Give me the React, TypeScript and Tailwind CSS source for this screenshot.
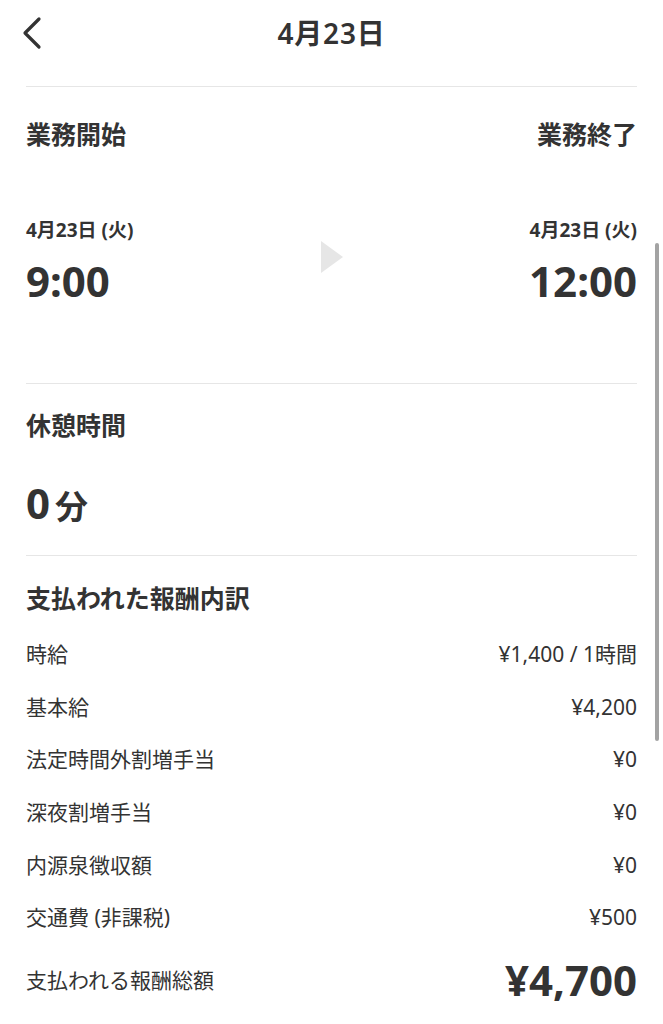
import React from 'react';

const rows: { label: string; value: string }[] = [
  { label: '時給', value: '¥1,400 / 1時間' },
  { label: '基本給', value: '¥4,200' },
  { label: '法定時間外割増手当', value: '¥0' },
  { label: '深夜割増手当', value: '¥0' },
  { label: '内源泉徴収額', value: '¥0' },
  { label: '交通費 (非課税)', value: '¥500' },
];

const font = { fontFamily: '"Noto Sans", "Noto Sans CJK JP", sans-serif' };

export default function App() {
  return (
    <div className="relative w-[663px] h-[1024px] overflow-hidden bg-white text-[#333333]" style={font}>
      <header className="grid grid-cols-[1fr_auto_1fr] items-center h-[66px] px-[20px]">
        <svg width="24" height="34" viewBox="0 0 24 34" className="ml-[-1px]">
          <path d="M20 3 L6 17 L20 31" fill="none" stroke="#333" strokeWidth="3.2" strokeLinecap="round" strokeLinejoin="round" />
        </svg>
        <h1 className="text-[28px] font-semibold leading-none tracking-[0.03em]">4月23日</h1>
        <div />
      </header>

      <div className="mx-[26px] mt-[20px] border-t border-[#e6e6e6]" />

      <section className="mx-[26px] pt-[31px] pb-[78px] border-b border-[#e6e6e6]">
        <div className="flex justify-between text-[25px] font-semibold leading-[32px]">
          <span>業務開始</span>
          <span>業務終了</span>
        </div>
        <div className="grid grid-cols-[1fr_auto_1fr] items-center mt-[68px]">
          <div>
            <div className="text-[19px] font-bold leading-[24px]">4月23日 (火)</div>
            <div className="mt-[15px] text-[42px] font-bold leading-[48px]">9:00</div>
          </div>
          <svg width="22" height="32" viewBox="0 0 22 32" className="mt-[-10px]">
            <path d="M0 0 L22 16 L0 32 Z" fill="#e6e6e6" />
          </svg>
          <div className="text-right">
            <div className="text-[19px] font-bold leading-[24px]">4月23日 (火)</div>
            <div className="mt-[15px] text-[42px] font-bold leading-[48px]">12:00</div>
          </div>
        </div>
      </section>

      <section className="mx-[26px] pt-[25px] pb-[26px] border-b border-[#e6e6e6]">
        <div className="text-[25px] font-semibold leading-[32px]">休憩時間</div>
        <div className="mt-[40px] flex items-baseline font-bold leading-[44px]">
          <span className="text-[42px]">0</span>
          <span className="ml-[5px] text-[33px]">分</span>
        </div>
      </section>

      <section className="mx-[26px] pt-[26px]">
        <div className="text-[25px] font-semibold leading-[32px]">支払われた報酬内訳</div>
        <div className="mt-[14px]">
          {rows.map((r) => (
            <div key={r.label} className="flex items-center justify-between h-[52.6px] text-[21px] leading-[28px]">
              <span>{r.label}</span>
              <span>{r.value}</span>
            </div>
          ))}
          <div className="flex items-center justify-between h-[52.6px] mt-[10px]">
            <span className="text-[21px] leading-[28px]">支払われる報酬総額</span>
            <span className="text-[42px] font-bold leading-[48px]">¥4,700</span>
          </div>
        </div>
      </section>

      <div className="absolute left-[655px] top-[243px] w-[4px] h-[498px] rounded-full bg-[#a3a3a3]" />
    </div>
  );
}
